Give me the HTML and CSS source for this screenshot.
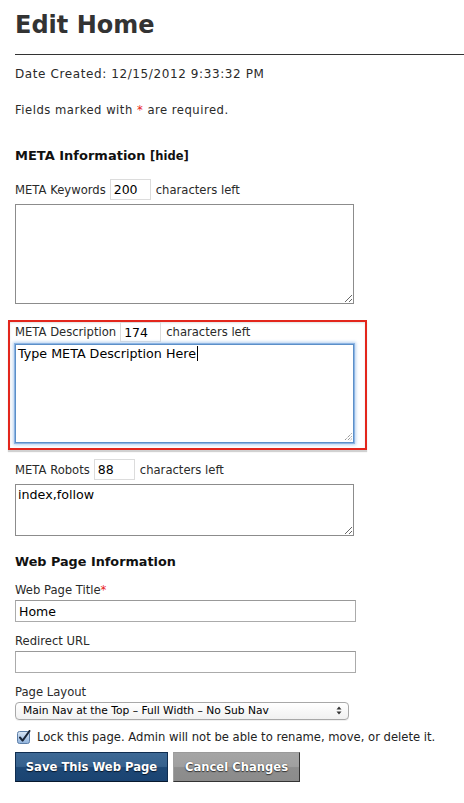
FILE: index.html
```html
<!DOCTYPE html>
<html>
<head>
<meta charset="utf-8">
<title>Edit Home</title>
<link rel="stylesheet" href="styles.css">
</head>
<body>
<div class="page">
  <h1 class="title">Edit Home</h1>
  <div class="rule"></div>
  <p class="date">Date Created: 12/15/2012 9:33:32 PM</p>
  <p class="note">Fields marked with <span class="req">*</span> are required.</p>

  <h2 class="section section-meta">META Information <span class="toggle">[hide]</span></h2>

  <div class="count-row row-keywords">
    <label class="count-label">META Keywords</label>
    <input class="count" type="text" value="200">
    <span class="count-text">characters left</span>
  </div>
  <textarea class="area area-keywords"></textarea>

  <div class="highlight">
    <div class="count-row row-desc">
      <label class="count-label">META Description</label>
      <input class="count" type="text" value="174">
      <span class="count-text">characters left</span>
    </div>
    <div class="area area-focus">Type META Description Here<span class="caret"></span>
      <svg class="grip" width="9" height="9" viewBox="0 0 9 9"><path d="M8.5 1.5 L1.5 8.5 M8.5 4.5 L4.5 8.5 M8.5 7 L7 8.5" stroke="#666" stroke-width="1" stroke-dasharray="1 1" fill="none"/></svg>
    </div>
  </div>

  <div class="count-row row-robots">
    <label class="count-label">META Robots</label>
    <input class="count" type="text" value="88">
    <span class="count-text">characters left</span>
  </div>
  <textarea class="area area-robots">index,follow</textarea>

  <h2 class="section section-web">Web Page Information</h2>

  <label class="field-label label-title">Web Page Title<span class="req">*</span></label>
  <input class="field" type="text" value="Home">

  <label class="field-label label-url">Redirect URL</label>
  <input class="field" type="text" value="">

  <label class="field-label label-layout">Page Layout</label>
  <div class="select-wrap">
    <div class="select">Main Nav at the Top – Full Width – No Sub Nav</div>
    <svg class="select-arrows" width="6" height="9" viewBox="0 0 6 9"><path d="M3 0.5 L5.5 3.5 L0.5 3.5 Z M3 8.5 L5.5 5.5 L0.5 5.5 Z" fill="#333"/></svg>
  </div>

  <div class="lock-row">
    <svg class="checkbox" width="14" height="14" viewBox="0 0 14 14">
      <defs>
        <linearGradient id="cb" x1="0" y1="0" x2="0" y2="1">
          <stop offset="0" stop-color="#d9e6f5"/>
          <stop offset="1" stop-color="#8fb2dc"/>
        </linearGradient>
      </defs>
      <rect x="0.5" y="1.5" width="12" height="12" rx="2" fill="url(#cb)" stroke="#5d7fa8"/>
      <path d="M3 7.5 L5.6 10.6 L12.5 1" stroke="#1a2638" stroke-width="2" fill="none" stroke-linecap="round" stroke-linejoin="round"/>
    </svg>
    <span class="lock-text">Lock this page. Admin will not be able to rename, move, or delete it.</span>
  </div>

  <div class="actions">
    <button class="btn btn-save" type="button">Save This Web Page</button>
    <button class="btn btn-cancel" type="button">Cancel Changes</button>
  </div>
</div>
</body>
</html>
```

FILE: styles.css
```css
* { box-sizing: border-box; }

body {
  margin: 0;
  background: #fff;
  font-family: "DejaVu Sans", sans-serif;
  font-size: 11.6px;
  color: #2a2a2a;
}

.page {
  padding: 0 0 20px 15px;
}

.title {
  margin: 10px 0 0;
  font-size: 24px;
  line-height: 30px;
  font-weight: bold;
  color: #333;
}

.rule {
  margin-top: 14px;
  height: 0;
  border-top: 1px solid #333;
}

.date {
  margin: 11px 0 0;
  font-size: 12px;
  line-height: 16px;
  letter-spacing: 0.6px;
}

.note {
  margin: 20px 0 0;
  line-height: 16px;
  letter-spacing: 0.5px;
}

.req { color: #e8231b; }

.section {
  margin: 28px 0 0;
  font-size: 13px;
  line-height: 20px;
  font-weight: bold;
  color: #111;
}

.toggle { font-size: 11.5px; }

.section-web { margin-top: 16px; font-size: 12.8px; }

.count-row {
  display: flex;
  align-items: center;
  gap: 4px;
  height: 21px;
}

.row-keywords { margin-top: 13px; }
.row-desc { height: 20px; }
.row-robots { margin-top: 9px; }

.count {
  width: 41px;
  height: 100%;
  margin: 0;
  padding: 0 0 0 3px;
  border: 1px solid #dcdcdc;
  font-family: "DejaVu Sans", sans-serif;
  font-size: 12.5px;
  color: #000;
  background: #fff;
  outline: none;
}

.count-text { margin-left: 1px; }

.area {
  display: block;
  width: 339px;
  margin: 4px 0 0;
  padding: 2px;
  border: 1px solid #8c8c8c;
  font-family: "DejaVu Sans", sans-serif;
  font-size: 12.7px;
  line-height: 16px;
  color: #000;
  background: #fff;
  outline: none;
}

.area-keywords { height: 100px; }
.area-robots { height: 52px; }

.highlight {
  width: 359px;
  margin: 16px 0 0 -7px;
  padding: 0 0 5px 5px;
  border: 2px solid #e3261c;
  box-shadow: 0 2px 1px rgba(0, 0, 0, 0.18), inset 0 1px 2px rgba(0, 0, 0, 0.12);
}

.area-focus {
  position: relative;
  height: 99px;
  margin-top: 2px;
  border: 1px solid #5c8fc8;
  box-shadow: 0 0 0 1px #8db5e3, 0 0 3px 2px #b9d3f0;
  padding: 1px 2px;
}

.caret {
  display: inline-block;
  width: 1px;
  height: 15px;
  margin-left: 1px;
  background: #000;
  vertical-align: -3px;
}

.grip {
  position: absolute;
  right: 1px;
  bottom: 1px;
}

.field-label {
  display: block;
  line-height: 16px;
}

.label-title { margin-top: 10px; }
.label-url { margin-top: 11px; }
.label-layout { margin-top: 11px; }

.field {
  display: block;
  width: 341px;
  height: 22px;
  margin: 2px 0 0;
  padding: 0 3px;
  border: 1px solid #ababab;
  border-top-color: #999;
  font-family: "DejaVu Sans", sans-serif;
  font-size: 12.5px;
  color: #000;
  background: #fff;
  outline: none;
}

.select-wrap {
  position: relative;
  width: 334px;
  height: 18px;
  margin-top: 2px;
}

.select {
  height: 100%;
  padding-left: 7px;
  border: 1px solid #a8a8a8;
  border-radius: 4px;
  background: linear-gradient(#ffffff, #f1f1f1);
  box-shadow: 0 1px 0 rgba(0, 0, 0, 0.06);
  font-size: 10.7px;
  line-height: 16px;
  color: #000;
}

.select-arrows {
  position: absolute;
  right: 7px;
  top: 4px;
}

.lock-row {
  display: flex;
  align-items: center;
  gap: 6px;
  height: 14px;
  margin-top: 10px;
  padding-left: 2px;
}

.checkbox { flex: none; }

.lock-text {
  font-size: 11.6px;
  color: #222;
}

.actions {
  display: flex;
  gap: 5px;
  margin-top: 8px;
}

.btn {
  height: 30px;
  margin: 0;
  padding: 0;
  white-space: nowrap;
  font-family: "DejaVu Sans", sans-serif;
  font-size: 11.6px;
  font-weight: bold;
  color: #fff;
  cursor: pointer;
}

.btn-save {
  width: 153px;
  border: 1px solid #0f2d50;
  border-bottom-color: #08192e;
  background: linear-gradient(#3e6995 0%, #36618d 48%, #1d4876 52%, #1b4472 100%);
  text-shadow: 0 1px 1px #061427;
}

.btn-cancel {
  width: 127px;
  border: 1px solid #333;
  border-top-color: #9a9a9a;
  border-left-color: #a0a0a0;
  background: linear-gradient(#a5a5a5 0%, #a0a0a0 48%, #8e8e8e 52%, #8b8b8b 100%);
  text-shadow: 0 1px 1px #333, 0 0 1px #444;
}
```
